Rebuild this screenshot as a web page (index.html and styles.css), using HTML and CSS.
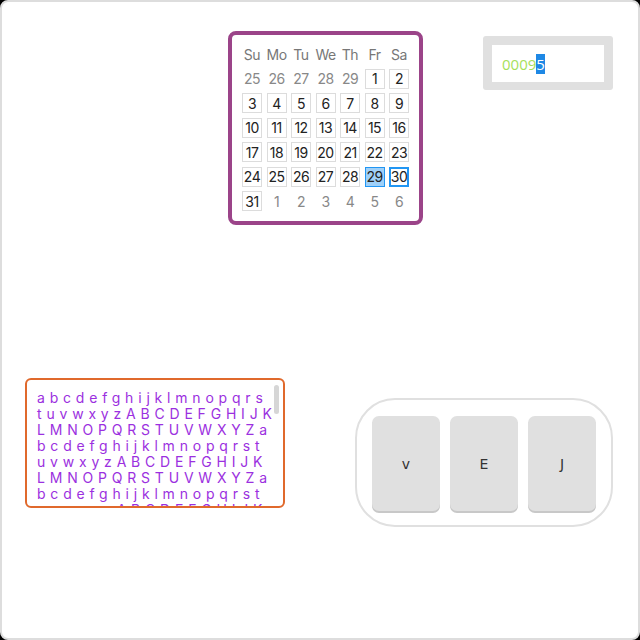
FILE: index.html
```html
<!DOCTYPE html>
<html lang="en">
<head>
    <meta charset="UTF-8">
    <title>Widgets</title>
    <link rel="stylesheet" href="styles.css">
</head>
<body>
    <div class="frame">
        <div class="calendar">
            <div class="dow">Su</div><div class="dow">Mo</div><div class="dow">Tu</div><div class="dow">We</div><div class="dow">Th</div><div class="dow">Fr</div><div class="dow">Sa</div>
            <div class="day out">25</div><div class="day out">26</div><div class="day out">27</div><div class="day out">28</div><div class="day out">29</div><div class="day">1</div><div class="day">2</div>
            <div class="day">3</div><div class="day">4</div><div class="day">5</div><div class="day">6</div><div class="day">7</div><div class="day">8</div><div class="day">9</div>
            <div class="day">10</div><div class="day">11</div><div class="day">12</div><div class="day">13</div><div class="day">14</div><div class="day">15</div><div class="day">16</div>
            <div class="day">17</div><div class="day">18</div><div class="day">19</div><div class="day">20</div><div class="day">21</div><div class="day">22</div><div class="day">23</div>
            <div class="day">24</div><div class="day">25</div><div class="day">26</div><div class="day">27</div><div class="day">28</div><div class="day selected">29</div><div class="day today">30</div>
            <div class="day">31</div><div class="day out">1</div><div class="day out">2</div><div class="day out">3</div><div class="day out">4</div><div class="day out">5</div><div class="day out">6</div>
        </div>

        <div class="number-box">
            <div class="number-field">0009<span class="sel">5</span></div>
        </div>

        <div class="letters">
            <div class="letters-text">
                <div>abcdefghijklmnopqrs</div>
                <div>tuvwxyzABCDEFGHIJK</div>
                <div>LMNOPQRSTUVWXYZa</div>
                <div>bcdefghijklmnopqrst</div>
                <div>uvwxyzABCDEFGHIJK</div>
                <div>LMNOPQRSTUVWXYZa</div>
                <div>bcdefghijklmnopqrst</div>
                <div>uvwxyzABCDEFGHIJK</div>
            </div>
            <div class="thumb"></div>
        </div>

        <div class="keys">
            <button class="key">v</button>
            <button class="key">E</button>
            <button class="key">J</button>
        </div>
    </div>
</body>
</html>
```
FILE: styles.css
```css
html {
    background: #000;
}
body {
    margin: 0;
    font-family: Inter, sans-serif;
}
.frame {
    position: relative;
    width: 640px;
    height: 640px;
    box-sizing: border-box;
    border: 2px solid #dddddd;
    border-radius: 8px;
    background: #fff;
}
.calendar {
    position: absolute;
    left: 226px;
    top: 29px;
    width: 195px;
    box-sizing: border-box;
    border: 4px solid #9b4489;
    border-radius: 8px;
    padding: 9px 10px 10px;
    display: grid;
    grid-template-columns: repeat(7, 20px);
    grid-auto-rows: 20px;
    gap: 4.5px;
    font-size: 14px;
}
.dow, .day {
    display: flex;
    align-items: center;
    justify-content: center;
    letter-spacing: -0.5px;
    white-space: nowrap;
}
.dow {
    color: #777;
}
.day {
    box-sizing: border-box;
    border: 1px solid #dcdcdc;
    color: #222;
}
.day.out {
    border-color: transparent;
    color: #888;
}
.day.selected {
    background: #9fd0f8;
    border-color: #2196f3;
}
.day.today {
    border: 2px solid #2196f3;
}
.number-box {
    position: absolute;
    left: 481px;
    top: 34px;
    width: 130px;
    height: 54px;
    box-sizing: border-box;
    padding: 9px 9px 8px;
    background: #e0e0e0;
    border-radius: 3px;
}
.number-field {
    height: 100%;
    background: #fff;
    padding-left: 10px;
    display: flex;
    align-items: center;
    font-family: "Open Sans", sans-serif;
    font-size: 15px;
    color: #a6e05a;
}
.sel {
    background: #1e88e5;
    color: #fff;
}
.letters {
    position: absolute;
    left: 23px;
    top: 376px;
    width: 260px;
    height: 130px;
    box-sizing: border-box;
    border: 2px solid #e0692c;
    border-radius: 6px;
    padding: 10px 0 0 10px;
    overflow: hidden;
}
.letters-text {
    color: #9b30e0;
    font-size: 14px;
    line-height: 16px;
    letter-spacing: 4.8px;
    white-space: nowrap;
}
.thumb {
    position: absolute;
    right: 4px;
    top: 5px;
    width: 5px;
    height: 29px;
    border-radius: 3px;
    background: #d6d6d6;
}
.keys {
    position: absolute;
    left: 353px;
    top: 396px;
    width: 258px;
    height: 129px;
    box-sizing: border-box;
    border: 2px solid #e0e0e0;
    border-radius: 40px;
    padding: 16px 15px;
    display: flex;
    gap: 10px;
}
.key {
    width: 68px;
    height: 95px;
    border: none;
    border-radius: 7px;
    background: #e0e0e0;
    box-shadow: 0 2px 0 #c8c8c8;
    font-family: "DejaVu Sans", sans-serif;
    font-size: 14px;
    color: #333;
    padding: 0;
}
```
